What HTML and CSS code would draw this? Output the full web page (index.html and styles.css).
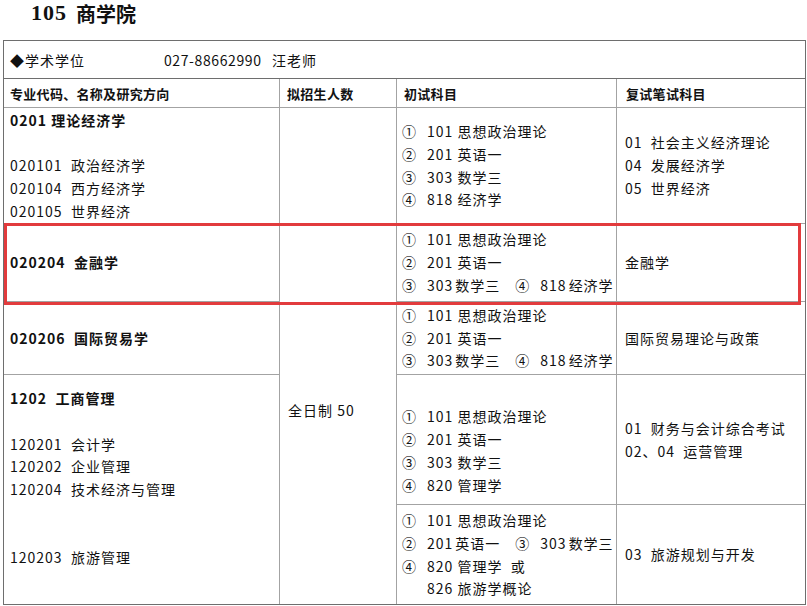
FILE: index.html
```html
<!DOCTYPE html>
<html lang="zh-CN">
<head>
<meta charset="utf-8">
<title>105 商学院</title>
<link rel="stylesheet" href="styles.css">
</head>
<body>
<div class="page">
  <h1 class="title"><span class="title-num">105</span><span class="title-name">商学院</span></h1>
  <div class="grid">
    <div class="cell info"><span class="info-kind">◆学术学位</span><span class="info-phone">027-88662990</span><span>汪老师</span></div>

    <div class="cell head c1">专业代码、名称及研究方向</div>
    <div class="cell head c2">拟招生人数</div>
    <div class="cell head c3">初试科目</div>
    <div class="cell head c4">复试笔试科目</div>

    <div class="cell c1 r3">
      <div class="ln b">0201 理论经济学</div>
      <div class="ln"></div>
      <div class="ln">020101&nbsp; 政治经济学</div>
      <div class="ln">020104&nbsp; 西方经济学</div>
      <div class="ln">020105&nbsp; 世界经济</div>
    </div>
    <div class="cell c2 r3"></div>
    <div class="cell c3 r3">
      <div class="ln"><span class="n">①</span>101 思想政治理论</div>
      <div class="ln"><span class="n">②</span>201 英语一</div>
      <div class="ln"><span class="n">③</span>303 数学三</div>
      <div class="ln"><span class="n">④</span>818 经济学</div>
    </div>
    <div class="cell c4 r3">
      <div class="ln">01&nbsp; 社会主义经济理论</div>
      <div class="ln">04&nbsp; 发展经济学</div>
      <div class="ln">05&nbsp; 世界经济</div>
    </div>

    <div class="cell c1 r4">
      <div class="ln b">020204&nbsp; 金融学</div>
    </div>
    <div class="cell c2 rspan">
      <div class="ln">全日制 50</div>
    </div>
    <div class="cell c3 r4">
      <div class="ln"><span class="n">①</span>101 思想政治理论</div>
      <div class="ln"><span class="n">②</span>201 英语一</div>
      <div class="ln"><span class="n">③</span>303<span class="tight">数学三</span><span class="n n-mid">④</span>818<span class="tight">经济学</span></div>
    </div>
    <div class="cell c4 r4">
      <div class="ln">金融学</div>
    </div>

    <div class="cell c1 r5">
      <div class="ln b">020206&nbsp; 国际贸易学</div>
    </div>
    <div class="cell c3 r5">
      <div class="ln"><span class="n">①</span>101 思想政治理论</div>
      <div class="ln"><span class="n">②</span>201 英语一</div>
      <div class="ln"><span class="n">③</span>303<span class="tight">数学三</span><span class="n n-mid">④</span>818<span class="tight">经济学</span></div>
    </div>
    <div class="cell c4 r5">
      <div class="ln">国际贸易理论与政策</div>
    </div>

    <div class="cell c1 r6">
      <div class="ln b">1202&nbsp; 工商管理</div>
      <div class="ln"></div>
      <div class="ln">120201&nbsp; 会计学</div>
      <div class="ln">120202&nbsp; 企业管理</div>
      <div class="ln">120204&nbsp; 技术经济与管理</div>
      <div class="ln"></div>
      <div class="ln"></div>
      <div class="ln">120203&nbsp; 旅游管理</div>
      <div class="ln"></div>
    </div>
    <div class="cell c3 r6a">
      <div class="ln"></div>
      <div class="ln"><span class="n">①</span>101 思想政治理论</div>
      <div class="ln"><span class="n">②</span>201 英语一</div>
      <div class="ln"><span class="n">③</span>303 数学三</div>
      <div class="ln"><span class="n">④</span>820 管理学</div>
    </div>
    <div class="cell c4 r6a">
      <div class="ln">01&nbsp; 财务与会计综合考试</div>
      <div class="ln">02、04&nbsp; 运营管理</div>
    </div>
    <div class="cell c3 r6b">
      <div class="ln"><span class="n">①</span>101 思想政治理论</div>
      <div class="ln"><span class="n">②</span>201<span class="tight">英语一</span><span class="n n-mid">③</span>303<span class="tight">数学三</span></div>
      <div class="ln"><span class="n">④</span>820 管理学&nbsp; 或</div>
      <div class="ln"><span class="n"></span>826 旅游学概论</div>
    </div>
    <div class="cell c4 r6b">
      <div class="ln">03&nbsp; 旅游规划与开发</div>
    </div>
  </div>
  <div class="highlight"></div>
</div>
</body>
</html>
```

FILE: styles.css
```css
* { box-sizing: border-box; }

html, body {
  margin: 0;
  padding: 0;
  background: #ffffff;
}

body {
  font-family: "Noto Sans CJK SC", "Noto Sans", sans-serif;
  color: #111;
  font-size: 14px;
  letter-spacing: 1px;
}

.page {
  position: relative;
  width: 807px;
  height: 606px;
  overflow: hidden;
}

.title {
  margin: 0;
  height: 40px;
  padding-left: 31px;
  display: flex;
  align-items: center;
  padding-bottom: 14px;
  font-weight: bold;
}

.title-num {
  font-family: "Liberation Serif", "Times New Roman", serif;
  font-size: 22px;
  letter-spacing: 1px;
  margin-right: 9px;
}

.title-name {
  font-family: "Noto Sans CJK SC", sans-serif;
  font-size: 20px;
  letter-spacing: 0;
}

.grid {
  margin-left: 3px;
  width: 803px;
  display: grid;
  grid-template-columns: 275px 116px 219px 188px;
  grid-template-rows: 37px 28px 115px 77px 72px 129px 99px;
  gap: 1px;
  background: #a3a3a3;
  border: 1px solid #6e6e6e;
}

.cell {
  background: #ffffff;
  display: flex;
  flex-direction: column;
  justify-content: center;
}

.ln {
  height: 22.7px;
  line-height: 22.7px;
  white-space: nowrap;
}

.b { font-weight: bold; }

.info {
  grid-column: 1 / -1;
  flex-direction: row;
  align-items: center;
  justify-content: flex-start;
  padding-left: 6px;
  border-bottom: 1px solid #6e6e6e;
  margin-bottom: -1px;
}

.info-kind {
  display: inline-block;
  width: 154px;
}

.info-phone {
  display: inline-block;
  width: 108px;
  letter-spacing: 0.6px;
}

.head {
  font-weight: bold;
  font-size: 13px;
  letter-spacing: 0.3px;
}

.c1 { grid-column: 1; padding-left: 6px; }
.c2 { grid-column: 2; padding-left: 7px; }
.c3 { grid-column: 3; padding-left: 5px; }
.c4 { grid-column: 4; padding-left: 8px; }

.head.c2 { padding-left: 7px; }
.head.c3 { padding-left: 7px; }
.head.c4 { padding-left: 9px; }

.r3 { grid-row: 3; }
.r4 { grid-row: 4; }
.r5 { grid-row: 5; }
.r6 { grid-row: 6 / 8; }
.r6a { grid-row: 6; }
.r6b { grid-row: 7; }
.rspan { grid-row: 4 / 8; padding-left: 8px; padding-bottom: 7px; }

.n {
  display: inline-block;
  width: 25px;
  letter-spacing: 0;
}

.n-mid {
  margin-left: 15px;
}

.tight {
  margin-left: 2px;
}

.highlight {
  position: absolute;
  left: 4px;
  top: 223px;
  width: 797px;
  height: 82px;
  border: 3px solid #e23b3d;
  pointer-events: none;
}
```
